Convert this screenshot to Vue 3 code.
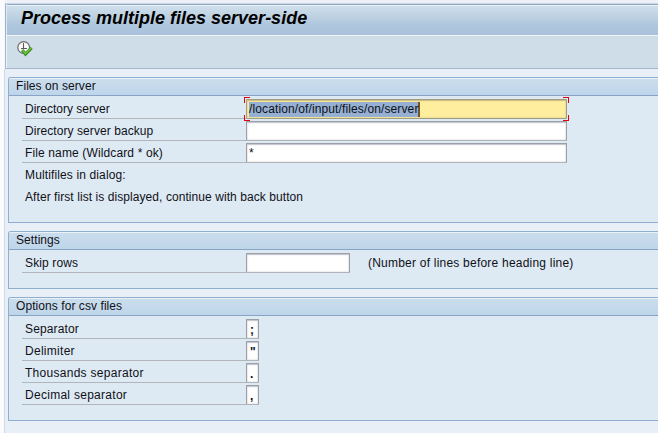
<script setup>
const fileRows = [
  { label: 'Directory server', value: '/location/of/input/files/on/server', focused: true, spacing: 'normal' },
  { label: 'Directory server backup', value: '', spacing: 'snug' },
  { label: 'File name (Wildcard * ok)', value: '*', spacing: 'open' },
]
const csvRows = [
  { label: 'Separator', value: ';', spacing: 'open' },
  { label: 'Delimiter', value: '"', spacing: 'loose' },
  { label: 'Thousands separator', value: '.', spacing: 'loose' },
  { label: 'Decimal separator', value: ',', spacing: 'loose' },
]
</script>

<template>
  <div class="screen">
    <header class="title-bar"><h1>Process multiple files server-side</h1></header>
    <div class="toolbar">
      <svg class="execute" width="16" height="16" viewBox="0 0 16 16">
        <circle cx="6.7" cy="6.5" r="5.9" fill="#fafafa" stroke="#6b6b6b" stroke-width="1.2" />
        <path d="M6.5 2v5.5M4 7.5h6" fill="none" stroke="#5c5c5c" stroke-width="1.1" />
        <path d="M5.2 9l3.3 4L14.6 6.8" fill="none" stroke="#3b8a24" stroke-width="3.2" />
        <path d="M5.5 9.3l3 3.3L14.2 7" fill="none" stroke="#6cc43b" stroke-width="1.5" />
      </svg>
    </div>
    <main class="content">
      <section class="group files">
        <h2>Files on server</h2>
        <div class="rows">
          <div v-for="row in fileRows" :key="row.label" class="row">
            <span class="label" :class="row.spacing">{{ row.label }}</span>
            <div class="field wide" :class="{ focused: row.focused }">
              <span class="value">{{ row.value }}</span>
              <template v-if="row.focused">
                <i class="corner tl"></i><i class="corner tr"></i>
                <i class="corner bl"></i><i class="corner br"></i>
              </template>
            </div>
          </div>
          <p class="text open">Multifiles in dialog:</p>
          <p class="text snug">After first list is displayed, continue with back button</p>
        </div>
      </section>
      <section class="group settings">
        <h2>Settings</h2>
        <div class="rows">
          <div class="row">
            <span class="label open">Skip rows</span>
            <div class="field medium"></div>
            <span class="note">(Number of lines before heading line)</span>
          </div>
        </div>
      </section>
      <section class="group csv">
        <h2>Options for csv files</h2>
        <div class="rows">
          <div v-for="row in csvRows" :key="row.label" class="row">
            <span class="label" :class="row.spacing">{{ row.label }}</span>
            <div class="field single"><span class="value">{{ row.value }}</span></div>
          </div>
        </div>
      </section>
    </main>
  </div>
</template>

<style>
body { margin: 0; background: #fafbfd; overflow: hidden; }
</style>

<style scoped>
.screen {
  box-sizing: border-box;
  width: 658px;
  height: 433px;
  padding-top: 3px;
  background: linear-gradient(90deg, #fafbfd 4px, #eef1f8 5px);
  font: 12px/22px "Liberation Sans", Arial, sans-serif;
  color: #101018;
  white-space: nowrap;
}
h1, h2, p { margin: 0; font-weight: normal; }
.title-bar {
  box-sizing: border-box;
  height: 32px;
  margin-left: 5px;
  border-top: 1px solid #ccd7e6;
  border-left: 1px solid #9db2cc;
  background: linear-gradient(#8fa5c2 1px, #eaf2f8 1px, #eaf2f8 2px, #cfe0ec 2px, #bed2e1 12px, #b0c8de 20px, #aac1dc);
  box-shadow: inset 1px 0 #dfeaf3;
}
h1 {
  padding-left: 15px;
  font-size: 18px;
  font-weight: bold;
  font-style: italic;
  line-height: 28px;
  color: #000;
}
.toolbar {
  box-sizing: border-box;
  height: 34px;
  margin-left: 5px;
  padding: 6px 0 0 11px;
  border: solid #a5b5cd;
  border-width: 0 0 1px 1px;
  background: #cfdde8;
  box-shadow: inset 1px 1px #edf4fa;
}
.execute { display: block; }
.content {
  box-sizing: border-box;
  height: 364px;
  margin-left: 4px;
  padding: 8px 0 0 3px;
  border-left: 1px solid #cfd9e7;
  background: #e8eff7;
}
.group {
  box-sizing: border-box;
  margin-bottom: 8px;
  border: solid #8eafcf;
  border-width: 1px 0 1px 1px;
  border-top-left-radius: 3px;
  background: #deeaf3;
}
.files { height: 146px; }
.settings { height: 58px; }
.csv { height: 124px; }
h2 {
  box-sizing: border-box;
  height: 18px;
  padding-left: 7px;
  border-bottom: 1px solid #87a3c5;
  border-top-left-radius: 2px;
  background: linear-gradient(#eaf2f8 1px, #cbddec 1px, #bed5ea);
  font-size: 12px;
  line-height: 17px;
  letter-spacing: 0.07px;
}
.rows { padding: 1px 0 0 13px; }
.row { display: flex; height: 22px; align-items: flex-end; }
.label {
  box-sizing: border-box;
  width: 224px;
  height: 22px;
  padding-left: 3px;
  border-bottom: 1px solid #b2b6ba;
  line-height: 24px;
}
.text { height: 22px; padding-left: 3px; line-height: 24px; }
.note { margin-left: 18px; line-height: 24px; height: 22px; letter-spacing: 0.22px; }
.snug { letter-spacing: 0.07px; }
.open { letter-spacing: 0.13px; }
.loose { letter-spacing: 0.28px; }
.field {
  position: relative;
  box-sizing: border-box;
  height: 20px;
  padding: 2px 0 0 2px;
  border: 1px solid #9b9ea6;
  border-bottom-color: #b0b3b9;
  border-radius: 1px;
  background: #fff;
  box-shadow: inset 0 1px 1px #c4c5cc, inset 0 0 2px #c8c9ce;
  line-height: 15px;
}
.wide { width: 321px; }
.medium { width: 104px; }
.single { width: 13px; }
.value { display: block; }
.single .value { padding-left: 1px; font-weight: bold; line-height: 17px; }
.focused {
  background: #ffee9e;
  border-color: #a09c82;
  box-shadow: inset 0 1px 1px #c9bd82, inset 0 0 2px #cdc28a;
}
.focused .value {
  box-sizing: border-box;
  width: 171px;
  height: 15px;
  border-right: 2px solid #74542a;
  background: #95b0d2;
  letter-spacing: 0.12px;
}
.corner { position: absolute; width: 5px; height: 5px; border: 0 solid #e2000f; }
.tl { left: -3px; top: -3px; border-width: 1px 0 0 1px; }
.tr { right: -3px; top: -3px; border-width: 1px 1px 0 0; }
.bl { left: -3px; bottom: -3px; border-width: 0 0 1px 1px; }
.br { right: -3px; bottom: -3px; border-width: 0 1px 1px 0; }
</style>
